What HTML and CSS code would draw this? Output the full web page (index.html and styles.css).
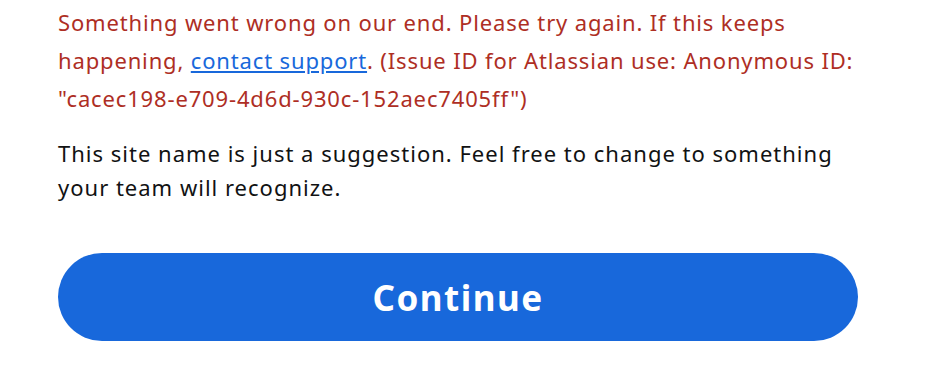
FILE: index.html
```html
<!DOCTYPE html>
<html lang="en">
<head>
<meta charset="UTF-8" />
<title>Create your site</title>
<link rel="stylesheet" href="styles.css">
</head>
<body>

<div class="site-form">
  <p class="error-msg">
    Something went wrong on our end. Please try again. If this keeps
    happening, <a href="#">contact support</a>. (Issue ID for Atlassian use: Anonymous ID:
    "cacec198-e709-4d6d-930c-152aec7405ff")
  </p>

  <p class="helper">
    This site name is just a suggestion. Feel free to change to something
    your team will recognize.
  </p>

  <button class="continue-btn" type="button">Continue</button>
</div>

</body>
</html>
```

FILE: styles.css
```css
body {
  margin: 0;
  font-family: "Noto Sans", "Open Sans", sans-serif;
  background-color: #ffffff;
}
.site-form {
  width: 800px;
  padding: 3px 0 0 58px;
}
.error-msg {
  margin: 0;
  font-size: 22px;
  line-height: 38px;
  letter-spacing: 0.85px;
  color: #ae2e24;
}
.error-msg a {
  color: #1868db;
  text-decoration: underline;
}
.helper {
  margin: 19px 0 0 0;
  font-size: 22px;
  line-height: 34px;
  letter-spacing: 1px;
  color: #111213;
}
.continue-btn {
  display: block;
  width: 800px;
  height: 88px;
  margin-top: 49px;
  border: none;
  border-radius: 44px;
  background: #1868db;
  color: #ffffff;
  font-family: "Noto Sans", "Open Sans", sans-serif;
  font-size: 35px;
  font-weight: 700;
  letter-spacing: 1.5px;
  cursor: pointer;
}
```
